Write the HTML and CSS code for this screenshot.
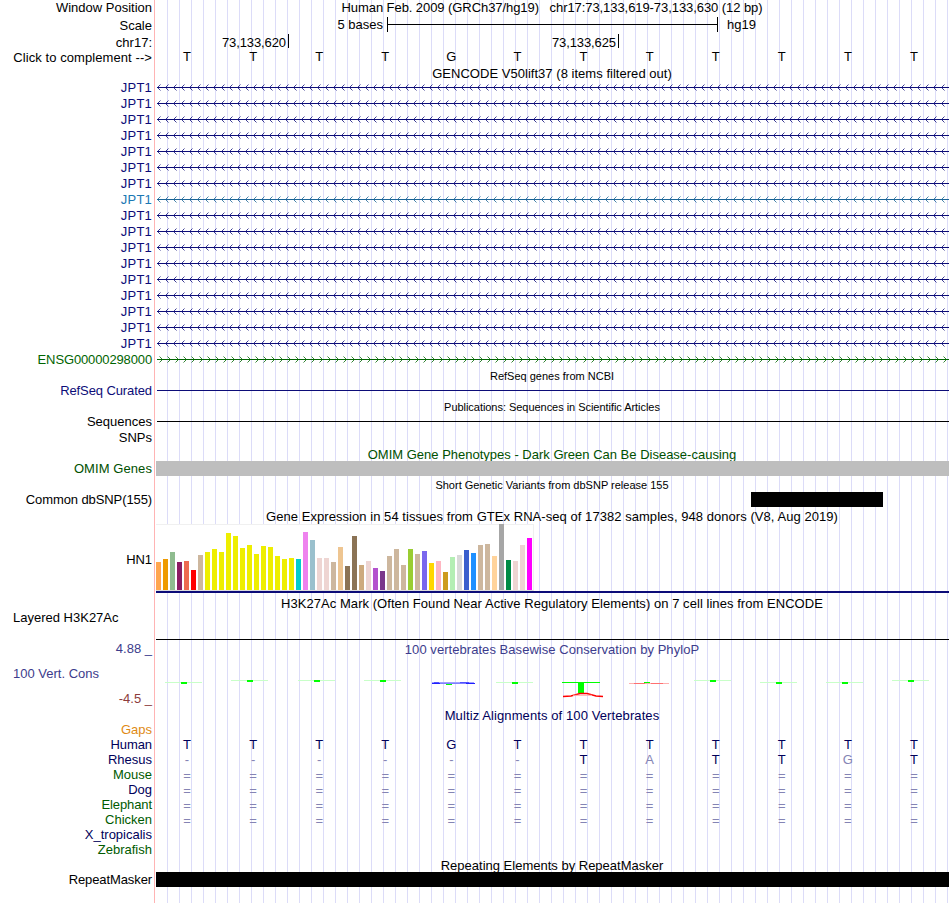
FILE: index.html
```
<!DOCTYPE html>
<html lang="en">
<head>
	<meta charset="UTF-8">
	<title>Human hg19 chr17:73,133,619-73,133,630</title>
	<link rel="stylesheet" href="styles.css">
</head>
<body>
	<div class="browser" id="browser">
		<div class="row">
			<div class="label">Window Position</div>
			<div class="track title t-pos">Human Feb. 2009 (GRCh37/hg19) &nbsp; chr17:73,133,619-73,133,630 (12 bp)</div>
		</div>
		<div class="row scale">
			<div class="label">Scale</div>
			<div class="track">
				<span class="bases5">5 bases</span>
				<span class="ruler"></span>
				<span class="db">hg19</span>
			</div>
		</div>
		<div class="row chrom">
			<div class="label">chr17:</div>
			<div class="track">
				<span class="tick first">73,133,620</span>
				<span class="tick">73,133,625</span>
			</div>
		</div>
		<div class="row complement">
			<div class="label wide">Click to complement --&gt;</div>
			<div class="track bases" data-seq="TTTTGTTTTTTT"></div>
		</div>

		<div class="row h14">
			<div class="label"></div>
			<div class="track title t-gencode">GENCODE V50lift37 (8 items filtered out)</div>
		</div>
		<div id="genes"></div>

		<div class="row h15 low">
			<div class="label"></div>
			<div class="track title small">RefSeq genes from NCBI</div>
		</div>
		<div class="row navy">
			<div class="label tight">RefSeq Curated</div>
			<div class="track"><div class="line"></div></div>
		</div>
		<div class="row h15 low">
			<div class="label"></div>
			<div class="track title small t-pubs">Publications: Sequences in Scientific Articles</div>
		</div>
		<div class="row">
			<div class="label">Sequences</div>
			<div class="track"><div class="line"></div></div>
		</div>
		<div class="row">
			<div class="label">SNPs</div>
			<div class="track"></div>
		</div>
		<div class="row h15 low omim">
			<div class="label"></div>
			<div class="track title">OMIM Gene Phenotypes - Dark Green Can Be Disease-causing</div>
		</div>
		<div class="row h15 omim">
			<div class="label wide">OMIM Genes</div>
			<div class="track"><div class="block grey"></div></div>
		</div>
		<div class="row low">
			<div class="label"></div>
			<div class="track title small">Short Genetic Variants from dbSNP release 155</div>
		</div>
		<div class="row h15">
			<div class="label tight">Common dbSNP(155)</div>
			<div class="track"><div class="block snp"></div></div>
		</div>
		<div class="row h17">
			<div class="label"></div>
			<div class="track title t-gtex">Gene Expression in 54 tissues from GTEx RNA-seq of 17382 samples, 948 donors (V8, Aug 2019)</div>
		</div>
		<div class="row gtex">
			<div class="label tight">HN1</div>
			<div class="track"><div class="bars" id="bars"></div></div>
		</div>
		<div class="row h17 h3k-title">
			<div class="label"></div>
			<div class="track title t-h3k">H3K27Ac Mark (Often Found Near Active Regulatory Elements) on 7 cell lines from ENCODE</div>
		</div>
		<div class="row h3k">
			<div class="label left">Layered H3K27Ac</div>
			<div class="track"></div>
		</div>
		<div class="row cons">
			<div class="label">
				<span>4.88 _</span>
				<span class="left">100 Vert. Cons</span>
				<span class="min">-4.5 _</span>
			</div>
			<div class="track">
				<div class="title t-phylo">100 vertebrates Basewise Conservation by PhyloP</div>
				<svg class="phylop" id="phylop" width="793" height="49">
					<!-- G -->
					<path d="M276 25.5H318" stroke="#a0a0ff" />
					<path d="M276 26.5H284M310 26.5H319" stroke="#2020ff" />
					<path d="M278 25.5H283M304 25.5H313" stroke="#5050ff" />
					<path d="M284 26.5H310" stroke="#8080ff" />
					<path d="M290 27.5H296" stroke="#00ff00" />
					<!-- T -->
					<path d="M406 25.5H444" stroke="#00ff00" />
					<rect x="422" y="25" width="6" height="11" fill="#00ff00" />
					<path d="M407 39.6L415 39L424 36.6L431 36.6L440 39L447 39.6" stroke="#ff0000" stroke-width="1.5" fill="none" />
					<path d="M417 38.3H436" stroke="#ffb0b0" />
					<!-- A -->
					<path d="M473 26.5H513" stroke="#ffb0b0" />
					<path d="M478 26.5H489M495 26.5H507" stroke="#ff7070" />
					<path d="M488 25.5H494" stroke="#00ff00" />
				</svg>
			</div>
		</div>
		<div class="row multiz-title">
			<div class="label"></div>
			<div class="track title t-multiz">Multiz Alignments of 100 Vertebrates</div>
		</div>
		<div class="row h15">
			<div class="label gaps">Gaps</div>
			<div class="track"></div>
		</div>
		<div class="row h15 species">
			<div class="label tight">Human</div>
			<div class="track bases" data-seq="TTTTGTTTTTTT"></div>
		</div>
		<div class="row h15 species">
			<div class="label">Rhesus</div>
			<div class="track bases" data-seq="------TaTTgT"></div>
		</div>
		<div class="row h15 species green">
			<div class="label">Mouse</div>
			<div class="track bases gap" data-seq="============"></div>
		</div>
		<div class="row h15 species">
			<div class="label">Dog</div>
			<div class="track bases gap" data-seq="============"></div>
		</div>
		<div class="row h15 species green">
			<div class="label tight">Elephant</div>
			<div class="track bases gap" data-seq="============"></div>
		</div>
		<div class="row h15 species green">
			<div class="label">Chicken</div>
			<div class="track bases gap" data-seq="============"></div>
		</div>
		<div class="row h15 species">
			<div class="label">X_tropicalis</div>
			<div class="track"></div>
		</div>
		<div class="row h15 species green">
			<div class="label">Zebrafish</div>
			<div class="track"></div>
		</div>
		<div class="row h15 low">
			<div class="label"></div>
			<div class="track title">Repeating Elements by RepeatMasker</div>
		</div>
		<div class="row h15">
			<div class="label tight">RepeatMasker</div>
			<div class="track"><div class="block"></div></div>
		</div>
	</div>

	<script src="script.js"></script>
</body>
</html>
```
FILE: styles.css
```
*{
	margin: 0;
	padding: 0;
	box-sizing: border-box;
}
body{
	background-color: #fff;
	font-family: "Liberation Sans", Arial, sans-serif;
	font-size: 13px;
	color: #000;
}
.browser{
	width: 949px;
	height: 903px;
	overflow: hidden;
	/* red border of the label column, then a guideline every 12px */
	background:
		linear-gradient(#ffb4b4, #ffb4b4) 154px 0 / 1px 100% no-repeat,
		repeating-linear-gradient(to right, transparent 0, transparent 11px, #dcdcf8 11px, #dcdcf8 12px) 156px 0 / 793px 100% no-repeat;
}
.row{
	display: flex;
	height: 16px;
	line-height: 16px;
	white-space: nowrap;
}
.label{
	width: 156px;
	flex: none;
	padding-right: 4px;
	text-align: right;
}
.label.wide{
	letter-spacing: 0.08px;
}
.label.tight{
	letter-spacing: -0.1px;
}
.track{
	width: 793px;
	flex: none;
}
.title{
	padding-right: 1px;
	text-align: center;
}
.small{
	font-size: 11px;
}
.h14{
	height: 14px;
	line-height: 15px;
}
.h15{
	height: 15px;
	line-height: 15px;
}
.h17{
	height: 17px;
	line-height: 20px;
}
.low{
	line-height: 18px;
}
.h15.low{
	line-height: 17px;
}
.t-pos{
	letter-spacing: -0.07px;
}
.t-gencode{
	letter-spacing: 0.03px;
}
.t-pubs{
	letter-spacing: -0.04px;
}
.t-gtex, .t-h3k, .t-phylo{
	letter-spacing: 0.05px;
}
.t-multiz{
	letter-spacing: 0.1px;
}

/* position, scale and bases */
.scale{
	height: 18px;
	line-height: 18px;
}
.scale .label{
	line-height: 20px;
}
.scale .track{
	display: flex;
}
.bases5{
	width: 231px;
	padding-right: 4px;
	text-align: right;
}
.ruler{
	width: 331px;
	height: 15px;
	margin-top: 1px;
	border-left: 1px solid #000;
	border-right: 1px solid #000;
	background: linear-gradient(#000, #000) 0 7px / 100% 1px no-repeat;
}
.db{
	margin-left: 9px;
}
.chrom{
	height: 15px;
	line-height: 17px;
}
.chrom .track{
	display: flex;
}
.tick{
	width: 330px;
	height: 14px;
	padding-right: 2px;
	border-right: 1px solid #000;
	text-align: right;
	letter-spacing: -0.1px;
}
.tick.first{
	width: 133px;
}
.complement{
	height: 17px;
	line-height: 17px;
}
.complement .bases{
	line-height: 15px;
}
.bases{
	display: grid;
	grid-template-columns: repeat(12, 1fr);
	margin-left: -2px;
	text-align: center;
}
.bases.gap{
	line-height: 17px;
}

/* genes */
.arrows{
	display: block;
	height: 7px;
	margin: 4px 0 0 1px;
	stroke: #0c0c78;
}
.gene .label{
	color: #0c0c78;
	letter-spacing: 0.2px;
}
.gene.alt .label{
	color: #1a78b4;
}
.gene.alt .arrows{
	stroke: #1a6496;
}
.gene.fwd .label{
	color: #006400;
	letter-spacing: -0.13px;
}
.gene.fwd .arrows{
	stroke: #006400;
}
.line{
	height: 1px;
	margin: 7px 0 0 1px;
	background-color: #000;
}
.navy .label{
	color: #0c0c78;
}
.navy .line{
	background-color: #0c0c78;
}
.block{
	position: relative;
	height: 15px;
	background-color: #000;
}
.grey{
	background-color: #bebebe;
}
.snp{
	width: 132px;
	margin-left: 595px;
}
.omim{
	color: #005000;
}

/* expression bars */
.gtex{
	height: 69px;
	line-height: 71px;
}
.gtex .track{
	border-bottom: 2px solid #0c0c78;
}
.bars{
	display: flex;
	align-items: flex-end;
	gap: 2px;
	width: 378px;
	height: 67px;
	background-color: #fff;
	border-top: 1px solid #f0f0f0;
	border-right: 1px solid #f0f0f0;
	border-bottom: 1px solid #dcdcdc;
}
.bars i{
	width: 5px;
	flex: none;
}
.h3k-title{
	line-height: 22px;
}
.h3k{
	height: 30px;
	line-height: 15px;
}
.h3k .track{
	border-bottom: 1px solid #000;
}
.left{
	text-align: left;
	padding-left: 13px;
}

/* conservation */
.cons{
	height: 66px;
}
.cons .label{
	display: flex;
	flex-direction: column;
	gap: 10px;
	padding-top: 1px;
	line-height: 15px;
	color: #3c3c8c;
}
.cons .min{
	color: #8c3c3c;
}
.cons .title{
	height: 17px;
	line-height: 19px;
	color: #3c3c8c;
}
.phylop{
	display: block;
}
.multiz-title{
	line-height: 19px;
	color: #00005a;
}
.gaps{
	color: #e08a14;
}
.species{
	color: #00005a;
}
.green .label{
	color: #005a00;
}
.dim{
	color: #8484b4;
}
```
FILE: script.js
```
var browser = document.getElementById("browser");
var svgNS = "http://www.w3.org/2000/svg";

// gene rows, item 7 has its own color, the last one is on the forward strand
var genes = document.getElementById("genes");
var html = "";
for(var i = 0; i < 18; i++){
	var fwd = i == 17;
	var heads = "";
	for(var x = 0; x < 792; x += 8){
		heads += fwd
			? "M" + (x + 2.5) + " 0.5l3 3l-3 3"
			: "M" + (x + 3.5) + " 0.5l-3 3l3 3";
	}
	html += '<div class="row gene' + (fwd ? " fwd" : (i == 7 ? " alt" : "")) + '">'
		+ '<div class="label">' + (fwd ? "ENSG00000298000" : "JPT1") + '</div>'
		+ '<div class="track"><svg class="arrows" width="792" height="7">'
		+ '<path d="' + heads + '" fill="none" stroke-width="0.8" />'
		+ '<path d="M0 3.5H792" />'
		+ '</svg></div></div>';
}
genes.innerHTML = html;

// one letter per base, lower case is a mismatch
var seqs = browser.querySelectorAll(".bases");
for(var i = 0; i < seqs.length; i++){
	var seq = seqs[i].getAttribute("data-seq");
	var s = "";
	for(var j = 0; j < seq.length; j++){
		var c = seq.charAt(j);
		var dim = c == "-" || c == "=" || c != c.toUpperCase();
		s += '<span' + (dim ? ' class="dim"' : '') + '>' + c.toUpperCase() + '</span>';
	}
	seqs[i].innerHTML = s;
}

// GTEx tissues: height, color
var tissues = [
	[28,"#ffa54f"],[31,"#ee9a00"],[38,"#8fbc8f"],[28,"#8b1c62"],[29,"#ee6a50"],[20,"#ff0000"],
	[35,"#cdb79e"],[38,"#eeee00"],[41,"#eeee00"],[38,"#eeee00"],[57,"#eeee00"],[54,"#eeee00"],
	[42,"#eeee00"],[45,"#eeee00"],[36,"#eeee00"],[44,"#eeee00"],[43,"#eeee00"],[34,"#eeee00"],
	[31,"#eeee00"],[32,"#eeee00"],[31,"#00cdcd"],[58,"#ee82ee"],[50,"#9ac0cd"],[32,"#eed5d2"],
	[32,"#eed5d2"],[28,"#cdb79e"],[43,"#eec591"],[24,"#8b7355"],[54,"#8b7355"],[25,"#cdaa7d"],
	[29,"#eed5d2"],[22,"#b452cd"],[19,"#7a378b"],[34,"#cdb79e"],[41,"#cdb79e"],[25,"#cdb79e"],
	[41,"#9acd32"],[36,"#cdb79e"],[39,"#7a67ee"],[27,"#ffd700"],[29,"#ffb6c1"],[18,"#cd9b1d"],
	[33,"#b4eeb4"],[35,"#d9d9d9"],[40,"#3a5fcd"],[37,"#1e90ff"],[45,"#cdb79e"],[46,"#cdb79e"],
	[34,"#ffd39b"],[66,"#a6a6a6"],[30,"#008b45"],[29,"#eed5d2"],[45,"#eed5d2"],[52,"#ff00ff"]
];
var bars = document.getElementById("bars");
for(var i = 0; i < tissues.length; i++){
	var bar = document.createElement("i");
	bar.style.height = tissues[i][0] + "px";
	bar.style.backgroundColor = tissues[i][1];
	bars.appendChild(bar);
}

// flat T logos, y of each base (0 = drawn by hand in the svg)
var phylop = document.getElementById("phylop");
var ys = [25,23,23,23,0,25,0,0,23,25,25,23];
for(var i = 0; i < ys.length; i++){
	if(!ys[i]) continue;
	var x = Math.round(9.4 + i * 66.08);
	addRect(x, ys[i], 37, 1, "#c8ffc8");
	addRect(x + 16, ys[i], 6, 2, "#00ff00");
}

function addRect(x, y, w, h, fill){
	var r = document.createElementNS(svgNS, "rect");
	r.setAttribute("x", x);
	r.setAttribute("y", y);
	r.setAttribute("width", w);
	r.setAttribute("height", h);
	r.setAttribute("fill", fill);
	phylop.appendChild(r);
}
```
